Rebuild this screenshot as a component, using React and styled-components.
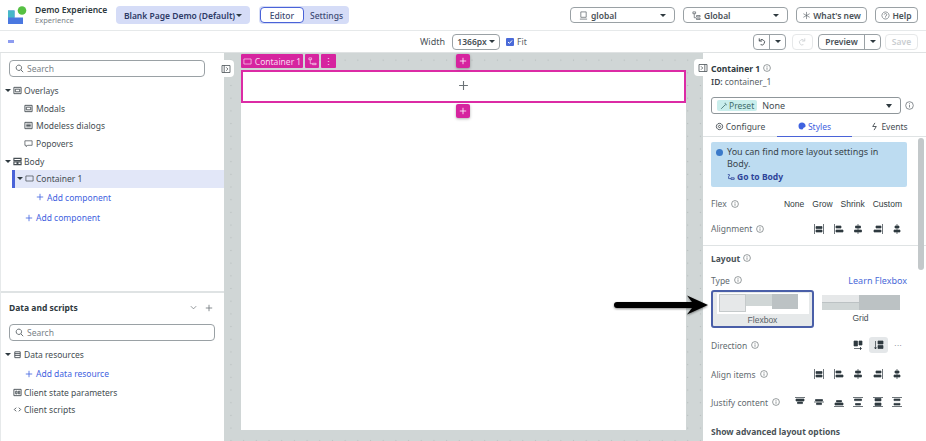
import React from 'react';
import styled, { createGlobalStyle } from 'styled-components';

const Global = createGlobalStyle`
  html, body { margin: 0; padding: 0; background: #fff; }
  * { box-sizing: border-box; }
`;

const Shell = styled.div`
  position: relative;
  width: 926px;
  height: 441px;
  overflow: hidden;
  display: flex;
  flex-direction: column;
  font-family: "Noto Sans", "Open Sans", sans-serif;
  font-size: 9px;
  color: #3f474d;
  background: #fff;
`;

const Header = styled.div`
  height: 31px;
  flex: none;
  display: flex;
  align-items: center;
  padding: 0 8px;
  border-bottom: 1px solid #e6e9ea;
`;

const Logo = styled.svg`
  flex: none;
`;

const Brand = styled.div`
  display: flex;
  flex-direction: column;
  margin-left: 8px;
  width: 81px;
  line-height: 11px;
`;

const BrandName = styled.span`
  font-size: 8.5px;
  font-weight: 600;
  color: #2f3a40;
`;

const BrandSub = styled.span`
  font-size: 7.5px;
  color: #7a8287;
`;

const PageSelect = styled.div`
  width: 134px;
  height: 18px;
  border-radius: 4px;
  background: #d5dcf7;
  color: #2d3a66;
  font-size: 8.5px;
  font-weight: 600;
  display: flex;
  align-items: center;
  justify-content: center;
  gap: 1px;
`;

const Tabs = styled.div`
  width: 90px;
  height: 18px;
  margin-left: 9px;
  border-radius: 4px;
  background: #d5dcf7;
  display: flex;
  align-items: center;
  color: #3d4a73;
  font-size: 8.5px;
  font-weight: 500;
`;

const TabOn = styled.div`
  width: 44px;
  height: 16px;
  margin-left: 1px;
  border: 1px solid #4a63d8;
  border-radius: 4px;
  background: #fff;
  display: flex;
  align-items: center;
  justify-content: center;
`;

const TabOff = styled.div`
  flex: 1;
  text-align: center;
`;

const Grow = styled.div`
  flex: 1;
`;

const Outline = styled.div`
  height: 16px;
  width: ${(p) => p.$w}px;
  margin-left: ${(p) => p.$ml || 0}px;
  flex: none;
  display: flex;
  align-items: center;
  justify-content: ${(p) => p.$between ? 'space-between' : 'center'};
  gap: 2px;
  padding: ${(p) => p.$between ? '0 8px' : '0'};
  border: 1px solid ${(p) => p.$off ? '#e6e8e9' : '#9aa1a5'};
  border-radius: 4px;
  background: #fff;
  color: ${(p) => p.$off ? '#c9cdd0' : '#4a5257'};
  font-size: 8.5px;
  font-weight: 600;
  white-space: nowrap;
`;

const Inline = styled.span`
  display: flex;
  align-items: center;
  gap: 3px;
`;

const Toolbar = styled.div`
  height: 22px;
  flex: none;
  display: flex;
  align-items: center;
  padding: 0 8px;
  border-bottom: 1px solid #dfe2e3;
`;

const Menu = styled.div`
  width: 6px;
  height: 3px;
  background: #8d9cf0;
`;

const WidthLabel = styled.span`
  margin-left: 406px;
  font-size: 9px;
  color: #4a5257;
`;

const Checkbox = styled.div`
  width: 8px;
  height: 8px;
  margin-left: 6px;
  border-radius: 1px;
  background: #4a6ad8;
  display: flex;
  align-items: center;
  justify-content: center;
`;

const FitLabel = styled.span`
  margin-left: 3px;
  font-size: 8.5px;
  color: #5a6267;
`;

const Split = styled.div`
  display: flex;
  height: 16px;
  width: ${(p) => p.$w}px;
  margin-left: ${(p) => p.$ml || 0}px;
  border: 1px solid #9aa1a5;
  border-radius: 4px;
  font-size: 8.5px;
  font-weight: 600;
  color: #4a5257;
`;

const SplitPart = styled.div`
  flex: ${(p) => p.$fixed ? 'none' : 1};
  width: ${(p) => p.$fixed ? `${p.$fixed}px` : 'auto'};
  display: flex;
  align-items: center;
  justify-content: center;
  border-left: ${(p) => p.$fixed ? '1px solid #9aa1a5' : 'none'};
`;

const Main = styled.div`
  flex: 1;
  min-height: 0;
  display: flex;
`;

const LeftPanel = styled.div`
  width: 224px;
  flex: none;
  display: flex;
  flex-direction: column;
  background: #fff;
  border-left: 1px solid #e6e9ea;
`;

const TreeTop = styled.div`
  height: 240px;
  flex: none;
  padding-top: 7px;
  border-bottom: 2px solid #dfe3e4;
`;

const SearchBox = styled.div`
  width: ${(p) => p.$w}px;
  height: 17px;
  margin-left: 8px;
  margin-bottom: 5px;
  display: flex;
  align-items: center;
  gap: 3px;
  padding-left: 5px;
  border: 1px solid #9aa1a5;
  border-radius: 4px;
  color: #7a8287;
  font-size: 8.5px;
`;

const Row = styled.div`
  height: ${(p) => p.$h || 17.6}px;
  display: flex;
  align-items: center;
  gap: ${(p) => p.$gap || 3}px;
  padding-left: ${(p) => p.$indent || 0}px;
  font-size: 8.5px;
  color: ${(p) => p.$link ? '#3f62e0' : '#454d52'};
  background: ${(p) => p.$active ? '#e2e7f8' : 'transparent'};
  box-shadow: ${(p) => p.$active ? 'inset 3px 0 0 #4a63d8' : 'none'};
  margin-left: ${(p) => p.$active ? '11px' : '0'};
  white-space: nowrap;
`;

const Caret = styled.span`
  width: 0;
  height: 0;
  flex: none;
  border-left: ${(p) => p.$s || 3}px solid transparent;
  border-right: ${(p) => p.$s || 3}px solid transparent;
  border-top: ${(p) => (p.$s || 3) + 0.5}px solid #2f3a40;
`;

const DataPanel = styled.div`
  flex: 1;
`;

const DataHead = styled.div`
  height: 31px;
  display: flex;
  align-items: center;
  gap: 7px;
  padding: 0 11px 2px 8px;
  color: #2f3a40;
  font-size: 8.5px;
  font-weight: 700;
`;

const Canvas = styled.div`
  position: relative;
  width: 479px;
  flex: none;
  padding: 17px 17px 11px 17px;
  display: flex;
  background-color: #d0d6d6;
  background-image: radial-gradient(circle, #b6bdbd 0.7px, transparent 1px);
  background-size: 12.7px 12.7px;
  background-position: 0.6px 0.8px;
`;

const Page = styled.div`
  flex: 1;
  background: #fff;
`;

const Selected = styled.div`
  height: 33px;
  padding-bottom: 2px;
  display: flex;
  align-items: center;
  justify-content: center;
  border: 2px solid #dc2ba5;
`;

const TagRow = styled.div`
  position: absolute;
  top: 1px;
  left: 17px;
  display: flex;
  gap: 2px;
`;

const Tag = styled.div`
  height: 14px;
  width: ${(p) => p.$w}px;
  display: flex;
  align-items: center;
  justify-content: center;
  gap: 3px;
  background: #d6249f;
  border-radius: 1px;
  color: #f9d8ef;
  font-size: 8.5px;
  white-space: nowrap;
`;

const PlusBtn = styled.div`
  position: absolute;
  left: 232px;
  top: ${(p) => p.$top}px;
  width: 14px;
  height: 14px;
  display: flex;
  align-items: center;
  justify-content: center;
  background: #d6249f;
  border-radius: 2px;
  box-shadow: 0 1px 3px rgba(0, 0, 0, 0.3);
`;

const Collapse = styled.div`
  position: absolute;
  top: ${(p) => p.$top}px;
  left: ${(p) => p.$left}px;
  width: 17px;
  height: 17px;
  display: flex;
  align-items: center;
  justify-content: center;
  background: #fff;
  border-radius: 4px;
  z-index: 2;
`;

const RightPanel = styled.div`
  position: relative;
  flex: 1;
  display: flex;
  flex-direction: column;
  background: #fff;
`;

const PropHead = styled.div`
  height: 84px;
  flex: none;
  padding: 8px 0 0 8px;
  border-bottom: 1px solid #dfe3e4;
`;

const PropTitle = styled.div`
  display: flex;
  align-items: center;
  gap: 3px;
  height: 14px;
  font-size: 8.5px;
  font-weight: 700;
  color: #2f3a40;
`;

const PropId = styled.div`
  height: 13px;
  display: flex;
  align-items: center;
  gap: 2px;
  font-size: 8.5px;
  color: #5a6267;
`;

const Bold = styled.b`
  font-weight: 600;
  color: #3f474d;
`;

const PresetRow = styled.div`
  display: flex;
  align-items: center;
  gap: 4px;
  margin-top: 9px;
`;

const PresetSelect = styled.div`
  width: 190px;
  height: 17px;
  display: flex;
  align-items: center;
  gap: 5px;
  padding: 0 8px 0 5px;
  border: 1px solid #8f969a;
  border-radius: 3px;
  font-size: 9px;
  color: #454d52;
`;

const PresetChip = styled.span`
  height: 11px;
  padding: 0 3px;
  display: flex;
  align-items: center;
  gap: 1px;
  background: #c9eeec;
  border-radius: 2px;
  font-size: 8.5px;
  color: #3e6b6a;
`;

const PropTabs = styled.div`
  display: flex;
  height: 21px;
  margin: 2px 0 0 -8px;
`;

const PropTab = styled.div`
  width: ${(p) => p.$w}px;
  display: flex;
  align-items: center;
  justify-content: center;
  gap: 2px;
  font-size: 8.5px;
  color: ${(p) => p.$on ? '#3f62e0' : '#454d52'};
  border-bottom: ${(p) => p.$on ? '1px solid #4a63d8' : '1px solid transparent'};
`;

const Scroll = styled.div`
  position: absolute;
  right: 2px;
  top: 85px;
  width: 6px;
  height: 132px;
  background: #c3c8ca;
  border-radius: 3px;
`;

const PropBody = styled.div`
  flex: 1;
  padding: 5px 19px 0 8px;
`;

const Notice = styled.div`
  width: 196px;
  height: 45px;
  padding: 4px 5px;
  display: flex;
  gap: 4px;
  background: #bddcf1;
  border-radius: 2px;
  font-size: 9px;
  line-height: 12px;
  color: #39454c;
`;

const Dot = styled.span`
  width: 7px;
  height: 7px;
  flex: none;
  margin-top: 3px;
  border-radius: 50%;
  background: #3a79c9;
`;

const GoBody = styled.div`
  margin-top: 1px;
  display: flex;
  align-items: center;
  gap: 2px;
  font-size: 8.5px;
  font-weight: 700;
  color: #2d4499;
`;

const PropRow = styled.div`
  width: 196px;
  height: ${(p) => p.$h || 28}px;
  margin-top: ${(p) => p.$mt || 0}px;
  display: flex;
  align-items: center;
  justify-content: space-between;
`;

const PropLabel = styled.span`
  display: flex;
  align-items: center;
  gap: 4px;
  font-size: 8.5px;
  color: #636b70;
  white-space: nowrap;
`;

const Options = styled.div`
  display: flex;
  align-items: center;
  gap: ${(p) => p.$gap}px;
  margin-right: 5px;
  font-family: "Liberation Sans", Arial, sans-serif;
  font-size: 8.5px;
  color: #2f3a40;
`;

const Divider = styled.div`
  height: 1px;
  margin: 8px -19px 0 -8px;
  background: #dfe3e4;
`;

const SectionTitle = styled.div`
  height: 24px;
  display: flex;
  align-items: center;
  gap: 3px;
  font-size: 8.5px;
  font-weight: 700;
  color: #4a5257;
`;

const TypeHead = styled.div`
  width: 196px;
  height: 20px;
  display: flex;
  align-items: center;
  justify-content: space-between;
`;

const LearnLink = styled.span`
  font-size: 9px;
  color: #4a6ad8;
`;

const Cards = styled.div`
  display: flex;
  gap: 7px;
  height: 38px;
`;

const FlexCard = styled.div`
  width: 103px;
  padding: 1px 4px 0;
  display: flex;
  flex-direction: column;
  align-items: center;
  border: 2px solid #4a5fa8;
  border-radius: 3px;
  background: #e6e9ea;
  font-family: "Liberation Sans", Arial, sans-serif;
  font-size: 8.5px;
  color: #5a6267;
`;

const CardArt = styled.div`
  width: 92px;
  height: 21px;
  padding: 1px 2px 0;
  margin-bottom: 1px;
  background: #fff;
  display: flex;
  align-items: flex-start;
`;

const Block = styled.div`
  height: ${(p) => p.$h}px;
  width: ${(p) => p.$w}px;
  background: ${(p) => p.$c};
  border: ${(p) => p.$b ? '1px solid #c5cacb' : 'none'};
`;

const GridCard = styled.div`
  width: 79px;
  padding-top: 5px;
  display: flex;
  flex-direction: column;
  align-items: center;
  font-family: "Liberation Sans", Arial, sans-serif;
  font-size: 8.5px;
  color: #454d52;
`;

const GridArt = styled.div`
  width: 78px;
  height: 15px;
  display: flex;
  background: #bcc2c4;
`;

const GridLeft = styled.div`
  width: 37px;
  display: flex;
  flex-direction: column;
  gap: 1px;
`;

const GridCell = styled.div`
  flex: 1;
  background: ${(p) => p.$c};
`;

const GridName = styled.span`
  margin-top: 3px;
`;

const DirActive = styled.span`
  width: 19px;
  height: 16px;
  display: flex;
  align-items: center;
  justify-content: center;
  background: #e4e7e9;
  border-radius: 3px;
`;

const More = styled.span`
  color: #6b7276;
  font-size: 8px;
`;

const Advanced = styled.div`
  margin-top: 10px;
  font-size: 8.5px;
  font-weight: 700;
  color: #4a5257;
`;

const Arrow = styled.svg`
  position: absolute;
  left: 610px;
  top: 294px;
  z-index: 3;
`;

const IconSvg = styled.svg`
  flex: none;
`;

const Line = ({ d, size = 10, color = '#454d52', w = 1 }) => (
  <IconSvg width={size} height={size} viewBox="0 0 10 10" fill="none" stroke={color} strokeWidth={w}>
    <path d={d} />
  </IconSvg>
);

const Info = ({ color = '#6b7276', size = 8 }) => (
  <IconSvg width={size} height={size} viewBox="0 0 8 8" fill="none" stroke={color} strokeWidth="0.7">
    <circle cx="4" cy="4" r="3.4" />
    <path d="M4 3.4v2.400M4 2v.8" />
  </IconSvg>
);

const Plus = ({ color = '#3f62e0', size = 8 }) => <Line d="M5 1v8M1 5h8" size={size} color={color} />;

const SearchIcon = () => <Line d="M4.3 1.2a3 3 0 1 0 .01 0zM6.5 6.5l2.6 2.6" size={9} color="#5a6267" />;

const Square = ({ color = '#454d52' }) => <Line d="M1 2.2h8v5.6H1z" size={9} color={color} w={0.8} />;

const PanelLeft = () => <Line d="M1 1.5h8v7H1zM3.2 1.5v7M5.2 3.3L6.9 5 5.2 6.700" size={10} color="#4a5257" w={0.8} />;

const PanelRight = () => <Line d="M1 1.5h8v7H1zM6.800 1.500v7M3 3.300L4.700 5 3 6.700" size={10} color="#4a5257" w={0.8} />;

const ALIGN = [
  'M.5 0v10M9.500 0v10M2 2.500h6v2H2zM2 6h6v2H2z',
  'M.5 0v10M2 2h5v2H2zM2 6h7v2H2z',
  'M5 0v10M2.500 2h5v2h-5zM1.500 6h7v2h-7z',
  'M9.500 0v10M3 2h5v2H3zM1 6h7v2H1z',
  'M5 0v10M3 2h4v2H3zM2 6h6v2H2z',
];

const JUSTIFY = [
  'M0 .5h10M1 2h8v2H1zM2.500 5h5v1.600h-5z',
  'M0 5h10M1.500 2.500h7V4h-7zM2.500 6h5v1.600h-5z',
  'M0 9.500h10M2.500 3.500h5V5h-5zM1 6h8v2H1z',
  'M0 .5h10M0 9.500h10M1.500 2h7v1.600h-7zM2.500 6.500h5V8h-5z',
  'M0 .5h10M0 9.500h10M2 1.500h6v2.400H2zM2 6h6v2.400H2z',
  'M0 .5h10M0 9.500h10M2 2h6v1.600H2zM2 6.400h6V8H2z',
];

const Glyph = ({ d }) => (
  <IconSvg width="10" height="10" viewBox="0 0 10 10" fill="#2f3a40" stroke="#2f3a40" strokeWidth="0.7">
    <path d={d} />
  </IconSvg>
);

const AlignSet = () => (
  <Options $gap={9.5}>
    {ALIGN.map((d) => <Glyph key={d} d={d} />)}
  </Options>
);

const App = () => (
  <Shell>
    <Global />
    <Header>
      <Logo width="19" height="19" viewBox="0 0 19 19">
        <path d="M0 4.500h6.500v7H15v6.500H0z" fill="#4a78e0" />
        <path d="M0 4.500h6.500v7H0z" fill="#46b8c8" />
        <circle cx="14" cy="4.500" r="4.300" fill="#56c043" />
      </Logo>
      <Brand>
        <BrandName>Demo Experience</BrandName>
        <BrandSub>Experience</BrandSub>
      </Brand>
      <PageSelect>Blank Page Demo (Default)<Caret /></PageSelect>
      <Tabs>
        <TabOn>Editor</TabOn>
        <TabOff>Settings</TabOff>
      </Tabs>
      <Grow />
      <Outline $w={105} $between>
        <Inline><Line d="M2 1h6v6H2zM1 9h8" size={9} color="#5a6267" w={0.8} />global</Inline>
        <Caret />
      </Outline>
      <Outline $w={105} $ml={8} $between>
        <Inline><Line d="M1 1h3v2H1zM2.500 3v4.500h2M5 5h4v1.500H5zM5 8h4v1.500H5z" size={9} color="#5a6267" w={0.8} />Global</Inline>
        <Caret />
      </Outline>
      <Outline $w={71} $ml={8}>
        <Line d="M5 1v8M1.500 3l7 4M8.500 3l-7 4" size={9} color="#5a6267" w={0.7} />What's new
      </Outline>
      <Outline $w={43} $ml={8}>
        <Line d="M5 1a4 4 0 1 0 .01 0zM3.600 4a1.400 1.400 0 1 1 1.400 1.600v.8M5 7.200v.6" size={9} color="#5a6267" w={0.7} />Help
      </Outline>
    </Header>
    <Toolbar>
      <Menu />
      <WidthLabel>Width</WidthLabel>
      <Outline $w={48} $ml={7}>1366px <Caret /></Outline>
      <Checkbox>
        <svg width="6" height="6" viewBox="0 0 6 6" fill="none" stroke="#fff" strokeWidth="1"><path d="M1 3l1.400 1.400L5 1.500" /></svg>
      </Checkbox>
      <FitLabel>Fit</FitLabel>
      <Grow />
      <Split $w={33}>
        <SplitPart>
          <Line d="M2.500 1.500v3h3M2.700 4.500A3 3 0 1 1 4 8.500" size={9} color="#3f474d" />
        </SplitPart>
        <SplitPart $fixed={16}><Caret /></SplitPart>
      </Split>
      <Outline $w={21} $ml={6} $off>
        <Line d="M7.500 1.500v3h-3M7.300 4.500A3 3 0 1 0 6 8.500" size={9} color="#cfd3d5" />
      </Outline>
      <Split $w={63} $ml={5}>
        <SplitPart>Preview</SplitPart>
        <SplitPart $fixed={16}><Caret /></SplitPart>
      </Split>
      <Outline $w={33} $ml={4} $off>Save</Outline>
    </Toolbar>
    <Main>
      <LeftPanel>
        <TreeTop>
          <SearchBox $w={196}><SearchIcon />Search</SearchBox>
          <Row $indent={4} $gap={2}><Caret /><Line d="M1 1.500h8v7H1zM2.500 3.500h5v3h-5z" size={9} />Overlays</Row>
          <Row $indent={23}><Line d="M1 1.500h8v7H1zM2.500 3.500h5v3h-5z" size={9} />Modals</Row>
          <Row $indent={23}><Line d="M1 1.500h8v7H1zM2.500 3.500h5M2.500 5h5M2.500 6.500h5" size={9} />Modeless dialogs</Row>
          <Row $indent={23}><Line d="M1 2h8v5H4L2.500 8.500V7H1z" size={9} w={0.8} />Popovers</Row>
          <Row $indent={4} $gap={2}><Caret /><Line d="M1 1.500h8V4H1zM1 5.500h3.500v3H1zM5.500 5.500H9v3H5.500z" size={9} w={1.200} />Body</Row>
          <Row $active $indent={5} $gap={2}><Caret /><Square />Container 1</Row>
          <Row $link $h={19} $indent={35}><Plus />Add component</Row>
          <Row $link $h={22} $indent={24}><Plus />Add component</Row>
        </TreeTop>
        <DataPanel>
          <DataHead>
            Data and scripts
            <Grow />
            <Line d="M2 3.500l3 3 3-3" size={9} color="#6b7276" w={0.8} />
            <Plus color="#6b7276" />
          </DataHead>
          <SearchBox $w={206}><SearchIcon />Search</SearchBox>
          <Row $indent={4} $gap={2}><Caret /><Line d="M2 2h6v6.500H2zM2 4h6M2 6h6" size={9} />Data resources</Row>
          <Row $link $h={20} $indent={24}><Plus />Add data resource</Row>
          <Row $indent={12} $gap={2}><Line d="M1 1.500h8v7H1zM3 3.500h1.500v3H3zM6 3.500h1.500v3H6z" size={9} />Client state parameters</Row>
          <Row $indent={12} $gap={2}><Line d="M3.500 3L1.500 5l2 2M6.500 3l2 2-2 2" size={9} />Client scripts</Row>
        </DataPanel>
      </LeftPanel>
      <Canvas>
        <Collapse $left={-7} $top={7}><PanelLeft /></Collapse>
        <Collapse $left={470} $top={6}><PanelRight /></Collapse>
        <TagRow>
          <Tag $w={62}><Square color="#f9d8ef" />Container 1</Tag>
          <Tag $w={14}><Line d="M1 1h3v2H1zM2.500 3v4.500h2M5 7h4v1.500H5z" size={9} color="#f9d8ef" w={0.8} /></Tag>
          <Tag $w={15}>⋮</Tag>
        </TagRow>
        <PlusBtn $top={1}><Plus color="#fff" /></PlusBtn>
        <PlusBtn $top={51}><Plus color="#fff" /></PlusBtn>
        <Page>
          <Selected><Plus color="#6b7276" size={11} /></Selected>
        </Page>
      </Canvas>
      <RightPanel>
        <PropHead>
          <PropTitle>Container 1 <Info /></PropTitle>
          <PropId><Bold>ID:</Bold> container_1</PropId>
          <PresetRow>
            <PresetSelect>
              <PresetChip><Line d="M1.500 8.500L7 3M6.500 1v1.500M8.500 3.500H7" size={8} color="#3e6b6a" />Preset</PresetChip>
              None
              <Grow />
              <Caret $s={3.500} />
            </PresetSelect>
            <Info size={9} />
          </PresetRow>
          <PropTabs>
            <PropTab $w={74}>
              <Line d="M5 1.500a3.500 3.500 0 1 0 .01 0zM5 3.700a1.300 1.300 0 1 0 .01 0z" size={9} />Configure
            </PropTab>
            <PropTab $w={75} $on>
              <svg width="8" height="8" viewBox="0 0 8 8"><path d="M4 .5a3.500 3.500 0 1 0 0 7c1.400 0 1-1.300 1.600-1.800.6-.5 2-.2 2-1.700C7.600 2 6 .5 4 .5z" fill="#3f62e0" /></svg>
              Styles
            </PropTab>
            <PropTab $w={74}>
              <Line d="M5.500 1L3 5h4L4.500 9" size={9} />Events
            </PropTab>
          </PropTabs>
        </PropHead>
        <Scroll />
        <PropBody>
          <Notice>
            <Dot />
            <div>
              You can find more layout settings in Body.
              <GoBody><Line d="M1 2h2v2M2 4v3h3M5 6h4v2H5z" size={8} color="#2d4499" />Go to Body</GoBody>
            </div>
          </Notice>
          <PropRow $h={33}>
            <PropLabel>Flex <Info /></PropLabel>
            <Options $gap={8}><span>None</span><span>Grow</span><span>Shrink</span><span>Custom</span></Options>
          </PropRow>
          <PropRow $h={17}>
            <PropLabel>Alignment <Info /></PropLabel>
            <AlignSet />
          </PropRow>
          <Divider />
          <SectionTitle>Layout <Info /></SectionTitle>
          <TypeHead>
            <PropLabel>Type <Info /></PropLabel>
            <LearnLink>Learn Flexbox</LearnLink>
          </TypeHead>
          <Cards>
            <FlexCard>
              <CardArt>
                <Block $w={27} $h={18} $c="#e6e8e9" $b />
                <Block $w={26} $h={12} $c="#d0d6d6" />
                <Block $w={26} $h={15} $c="#bcc2c4" />
              </CardArt>
              Flexbox
            </FlexCard>
            <GridCard>
              <GridArt>
                <GridLeft>
                  <GridCell $c="#e6e8e9" />
                  <GridCell $c="#d0d6d6" />
                </GridLeft>
              </GridArt>
              <GridName>Grid</GridName>
            </GridCard>
          </Cards>
          <PropRow $h={30} $mt={2}>
            <PropLabel>Direction <Info /></PropLabel>
            <Options $gap={6}>
              <Glyph d="M1 1h3.500v5H1zM6 1h3v4H6zM1 8.500h7M7 7l1.500 1.500L7 10" />
              <DirActive><Glyph d="M1.500 1v8M.5 7.500l1 1.500 1-1.500M4 1h5v3H4zM4 5.500h5v3H4z" /></DirActive>
              <More>···</More>
            </Options>
          </PropRow>
          <PropRow>
            <PropLabel>Align items <Info /></PropLabel>
            <AlignSet />
          </PropRow>
          <PropRow>
            <PropLabel>Justify content <Info /></PropLabel>
            <Options $gap={9.5}>
              {JUSTIFY.map((d) => <Glyph key={d} d={d} />)}
            </Options>
          </PropRow>
          <Advanced>Show advanced layout options</Advanced>
        </PropBody>
      </RightPanel>
    </Main>
    <Arrow width="100" height="24" viewBox="0 0 100 24">
      <defs>
        <filter id="s" x="-10%" y="-40%" width="120%" height="180%">
          <feDropShadow dx="0" dy="1" stdDeviation="1" floodOpacity="0.45" />
        </filter>
      </defs>
      <path d="M7 8h75l-5-6.500L98 11l-21 9.500 5-6.500H7a3 3 0 0 1 0-6z" fill="#000" filter="url(#s)" />
    </Arrow>
  </Shell>
);

export default App;
